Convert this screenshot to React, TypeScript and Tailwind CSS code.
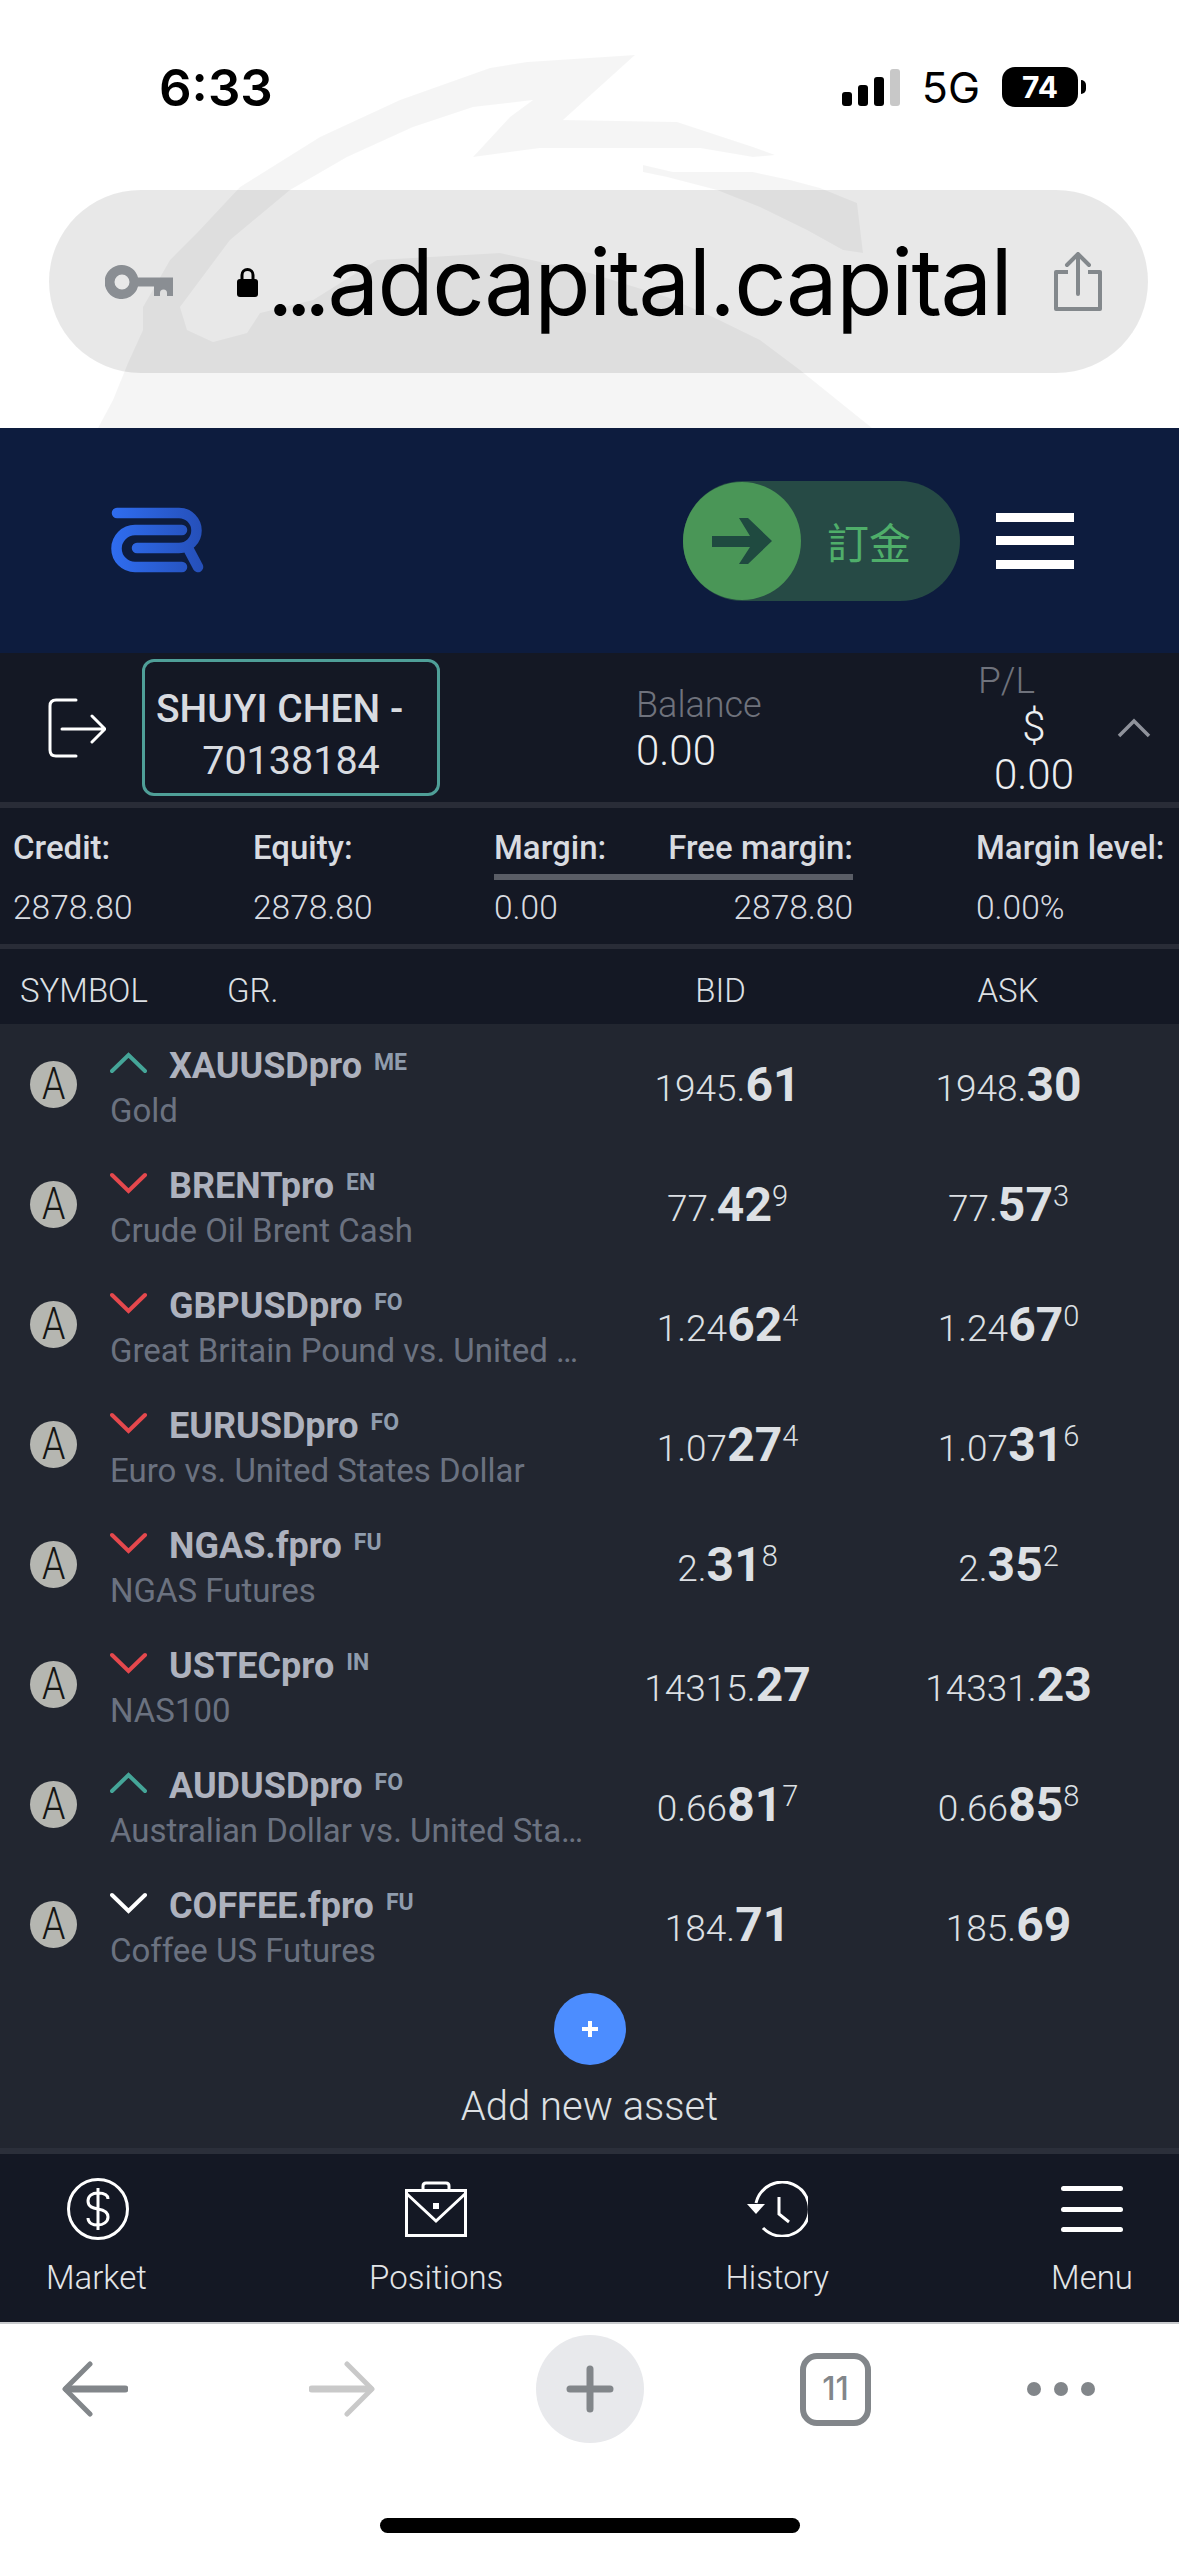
import type { ReactNode } from "react";

const assets = [
  { symbol: "XAUUSDpro", group: "ME", name: "Gold", dir: "up", bid: ["1945.", "61", ""], ask: ["1948.", "30", ""] },
  { symbol: "BRENTpro", group: "EN", name: "Crude Oil Brent Cash", dir: "down", bid: ["77.", "42", "9"], ask: ["77.", "57", "3"] },
  { symbol: "GBPUSDpro", group: "FO", name: "Great Britain Pound vs. United States Dollar", dir: "down", bid: ["1.24", "62", "4"], ask: ["1.24", "67", "0"] },
  { symbol: "EURUSDpro", group: "FO", name: "Euro vs. United States Dollar", dir: "down", bid: ["1.07", "27", "4"], ask: ["1.07", "31", "6"] },
  { symbol: "NGAS.fpro", group: "FU", name: "NGAS Futures", dir: "down", bid: ["2.", "31", "8"], ask: ["2.", "35", "2"] },
  { symbol: "USTECpro", group: "IN", name: "NAS100", dir: "down", bid: ["14315.", "27", ""], ask: ["14331.", "23", ""] },
  { symbol: "AUDUSDpro", group: "FO", name: "Australian Dollar vs. United States Dollar", dir: "up", bid: ["0.66", "81", "7"], ask: ["0.66", "85", "8"] },
  { symbol: "COFFEE.fpro", group: "FU", name: "Coffee US Futures", dir: "flat", bid: ["184.", "71", ""], ask: ["185.", "69", ""] },
];

function Chevron({ dir }: { dir: string }) {
  const color = dir === "up" ? "#45a598" : dir === "down" ? "#e5484d" : "#ffffff";
  return (
    <svg width="37" height="22" viewBox="0 0 37 22" className="shrink-0 mr-[22px] -mt-[5px]" fill="none" stroke={color} strokeWidth="4" strokeLinecap="round" strokeLinejoin="miter">
      {dir === "up" ? <path d="M2 19 L18.5 3 L35 19" /> : <path d="M2 3 L18.5 19 L35 3" />}
    </svg>
  );
}

function Price({ parts }: { parts: string[] }) {
  return (
    <div className="w-[281px] text-center text-[#dde0e4] whitespace-nowrap pt-[2px]">
      <span className="text-[37px] font-light">{parts[0]}</span>
      <span className="text-[48px] font-bold">{parts[1]}</span>
      {parts[2] && <span className="text-[29px] font-light align-[15px]">{parts[2]}</span>}
    </div>
  );
}

function AssetRow({ asset }: { asset: (typeof assets)[number] }) {
  return (
    <div className="h-[120px] flex items-center pl-[30px]">
      <div className="w-[47px] h-[47px] rounded-full bg-[#b5b6b1] flex items-center justify-center shrink-0">
        <span className="text-[44px] font-light leading-none text-[#161616] scale-x-[0.85]">A</span>
      </div>
      <div className="ml-[33px] w-[477px] mt-[10px] min-w-0">
        <div className="flex items-center h-[40px]">
          <Chevron dir={asset.dir} />
          <span className="text-[36px] font-bold text-[#aeb2be]">{asset.symbol}</span>
          <span className="ml-[12px] text-[23px] font-bold text-[#8f9cad] -mt-[4px]">{asset.group}</span>
        </div>
        <div className="text-[33px] text-[#6b7280] truncate leading-[44px] mt-[3px]">{asset.name}</div>
      </div>
      <Price parts={asset.bid} />
      <Price parts={asset.ask} />
    </div>
  );
}

function NavItem({ label, children }: { label: string; children: ReactNode }) {
  return (
    <div className="flex flex-col items-center">
      <div className="h-[62px] flex items-center justify-center">{children}</div>
      <span className="text-[33px] font-light text-[#e3e5e8] leading-[40px] mt-[18px]">{label}</span>
    </div>
  );
}

export default function App() {
  return (
    <div className="w-[1179px] h-[2556px] bg-white overflow-hidden font-['Roboto',sans-serif]">
      {/* browser chrome */}
      <div className="relative h-[428px] pt-[67px]">
        <svg className="absolute inset-0 pointer-events-none" width="1179" height="428" viewBox="0 0 1179 428" fill="#000" fillOpacity="0.04">
          <path d="M635 55 L527 62 L490 68 L400 100 L320 137 L240 187 L197 233 L170 260 L143 307 L143 330 L128 363 L113 400 L98 428 L872 428 L800 370 L760 340 L713 317 L667 297 L590 273 L500 253 L377 260 L313 300 L260 313 L247 333 L213 342 L187 330 L180 307 L230 240 L290 190 L347 157 L413 127 L473 107 L533 100 L510 117 L473 157 L540 148 L700 148 L753 157 L775 155 L753 147 L677 122 L563 120 Z" />
          <path d="M643 165 L673 172 L753 172 L790 180 L820 188 L857 203 L863 253 L843 250 L807 230 L760 207 L717 190 L667 177 L643 172 Z" />
        </svg>
        <div className="relative flex items-center h-[40px] font-['Inter',sans-serif]">
          <span className="ml-[159px] text-[51px] font-semibold text-black leading-none">6:33</span>
          <div className="ml-auto flex items-center mr-[93px]">
            <svg width="58" height="37" viewBox="0 0 58 37">
              <rect x="0" y="23" width="10" height="14" rx="3" fill="#000" />
              <rect x="16" y="16" width="10" height="21" rx="3" fill="#000" />
              <rect x="32" y="8" width="10" height="29" rx="3" fill="#000" />
              <rect x="48" y="0" width="10" height="37" rx="3" fill="#c8c8c8" />
            </svg>
            <span className="ml-[22px] text-[43px] text-black leading-none">5G</span>
            <div className="ml-[22px] w-[76px] h-[40px] rounded-[13px] bg-black flex items-center justify-center text-[30px] font-bold text-white">74</div>
            <div className="ml-[3px] w-[5px] h-[14px] rounded-r-full bg-black" />
          </div>
        </div>
        <div className="relative mt-[83px] ml-[49px] mr-[31px] h-[183px] rounded-full bg-black/[0.09] flex items-center">
          <svg className="ml-[56px]" width="68" height="34" viewBox="0 0 68 34" fill="#8a8e93">
            <path fillRule="evenodd" d="M17 0 A17 17 0 0 1 33 12.5 H68 V31 H62 V28 A3.5 3.5 0 0 0 55 28 V31 H49 V21.5 H33 A17 17 0 1 1 17 0 Z M17 9.5 A7.5 7.5 0 1 0 17 24.5 A7.5 7.5 0 1 0 17 9.5 Z" />
          </svg>
          <svg className="ml-[64px]" width="21" height="30" viewBox="0 0 21 30">
            <path d="M5 13 V8 A5.5 5.5 0 0 1 16 8 V13" fill="none" stroke="#000" strokeWidth="3" />
            <rect x="0" y="12" width="21" height="18" rx="3" fill="#000" />
          </svg>
          <span className="ml-[9px] text-[92px] leading-none text-black font-['Inter',sans-serif] whitespace-nowrap tracking-[-1.6px]">
            <span className="tracking-[-8px] mr-[5px]">...</span>adcapital.capital
          </span>
          <svg className="absolute left-[1004px] top-[62px]" width="50" height="60" viewBox="0 0 50 60" fill="none" stroke="#83888c" strokeWidth="4">
            <path d="M15 20 H3 V57 H47 V20 H35" strokeLinejoin="round" />
            <path d="M25 42 V3 M14 13 L25 2 L36 13" strokeLinecap="round" />
          </svg>
        </div>
      </div>

      {/* site header */}
      <div className="h-[225px] bg-[#0d1c3e] flex items-center">
        <svg className="ml-[111px] -mt-[1px]" width="93" height="66" viewBox="0 0 93 66" fill="none" strokeWidth="10.5" strokeLinecap="round" stroke="url(#logoGrad)">
          <defs>
            <linearGradient id="logoGrad" x1="0" y1="0" x2="93" y2="0" gradientUnits="userSpaceOnUse">
              <stop offset="0" stopColor="#2f6df0" />
              <stop offset="1" stopColor="#254fb8" />
            </linearGradient>
          </defs>
          <path d="M6 6 H68 A17.5 17.5 0 0 1 68 41 H26" />
          <path d="M71 23 H24 A18.5 18.5 0 0 0 24 60 H71" />
          <path d="M78 43 L87 60" />
        </svg>
        <div className="ml-[479px] w-[277px] h-[120px] rounded-full bg-[#264a45] flex items-center font-['Noto_Sans_CJK_TC',sans-serif]">
          <div className="w-[118px] h-[118px] rounded-full bg-[#4a9657] flex items-center justify-center shrink-0">
            <svg width="60" height="46" viewBox="0 0 60 46" fill="#1f4a40">
              <path d="M0 18 H38 L27 0 H36 L60 23 L36 46 H27 L38 29 H0 Z" />
            </svg>
          </div>
          <span className="ml-[26px] text-[42px] text-[#4fae6a] leading-none whitespace-nowrap">訂金</span>
        </div>
        <div className="ml-[36px] w-[78px] h-[56px] flex flex-col justify-between">
          <div className="h-[9px] bg-white" />
          <div className="h-[9px] bg-white" />
          <div className="h-[9px] bg-white" />
        </div>
      </div>

      {/* account summary */}
      <div className="h-[149px] bg-[#141824] flex items-center">
        <svg className="ml-[48px]" width="58" height="60" viewBox="0 0 58 60" fill="none" stroke="#fff" strokeWidth="3" strokeLinecap="round" strokeLinejoin="round">
          <path d="M28 2 H8 Q2 2 2 8 V52 Q2 58 8 58 H28" />
          <path d="M14 31 H56 M44 18 L57 31 L44 44" />
        </svg>
        <div className="ml-[36px] w-[298px] h-[137px] border-[3px] border-[#4f9f98] rounded-[12px] flex flex-col justify-center text-center leading-[51px] pt-[15px]">
          <span className="text-[39px] font-medium text-[#d8dbe0] whitespace-nowrap text-left pl-[11px]">SHUYI CHEN -</span>
          <span className="text-[39.5px] text-[#d8dbe0]">70138184</span>
        </div>
        <div className="ml-[196px] w-[342px] leading-[45px]">
          <div className="text-[36px] font-light text-[#6f727c]">Balance</div>
          <div className="text-[42px] font-light text-[#eceef0]">0.00</div>
        </div>
        <div className="w-[112px] leading-[48px] text-center">
          <div className="text-[37px] font-light text-[#6f727c] text-left">P/L</div>
          <div className="text-[42px] font-light text-[#eceef0] -mt-[2px]">$</div>
          <div className="text-[42px] font-light text-[#eceef0]">0.00</div>
        </div>
        <svg className="ml-[27px]" width="34" height="20" viewBox="0 0 34 20" fill="none" stroke="#8f929b" strokeWidth="3.5">
          <path d="M2 18 L17 3 L32 18" />
        </svg>
      </div>
      <div className="h-[6px] bg-[#292c37]" />

      {/* margins */}
      <div className="h-[136px] bg-[#141824] flex pl-[13px] pt-[21px] text-[#d8dbe0]">
        <div className="w-[240px]">
          <div className="text-[33px] font-medium leading-[38px]">Credit:</div>
          <div className="text-[33.5px] font-light leading-[40px] mt-[21px]">2878.80</div>
        </div>
        <div className="w-[241px]">
          <div className="text-[33px] font-medium leading-[38px]">Equity:</div>
          <div className="text-[33.5px] font-light leading-[40px] mt-[21px]">2878.80</div>
        </div>
        <div className="w-[359px]">
          <div className="flex justify-between text-[33px] font-medium leading-[38px]">
            <span>Margin:</span>
            <span>Free margin:</span>
          </div>
          <div className="h-[6px] bg-[#5a5d66] mt-[7px]" />
          <div className="flex justify-between text-[33.5px] font-light leading-[40px] mt-[8px]">
            <span>0.00</span>
            <span>2878.80</span>
          </div>
        </div>
        <div className="ml-[123px] whitespace-nowrap">
          <div className="text-[33px] font-medium leading-[38px]">Margin level:</div>
          <div className="text-[33.5px] font-light leading-[40px] mt-[21px]">0.00%</div>
        </div>
      </div>
      <div className="h-[5px] bg-[#292c37]" />

      {/* table head */}
      <div className="h-[75px] bg-[#141824] flex items-center text-[33px] font-light text-[#dde0e4] pt-[9px]">
        <div className="w-[227px] pl-[20px]">SYMBOL</div>
        <div className="w-[354px]">GR.</div>
        <div className="w-[279px] text-center">BID</div>
        <div className="w-[296px] text-center">ASK</div>
      </div>

      {/* assets */}
      <div className="h-[1124px] bg-[#222630]">
        {assets.map((asset) => (
          <AssetRow key={asset.symbol} asset={asset} />
        ))}
        <div className="flex flex-col items-center pt-[9px]">
          <div className="w-[72px] h-[72px] rounded-full bg-[#4c8dff] flex items-center justify-center">
            <svg width="20" height="20" viewBox="0 0 20 20" stroke="#fff" strokeWidth="4">
              <path d="M10 2 V18 M2 10 H18" />
            </svg>
          </div>
          <div className="mt-[20px] text-[40px] font-light text-[#dde0e4] leading-[44px]">Add new asset</div>
        </div>
      </div>
      <div className="h-[6px] bg-[#2b2f3a]" />

      {/* bottom nav */}
      <div className="h-[168px] bg-[#141824] flex justify-between px-[46px] pt-[24px]">
        <NavItem label="Market">
          <svg width="62" height="62" viewBox="0 0 62 62" fill="none" stroke="#fff" strokeWidth="3" className="ml-[3px]">
            <circle cx="31" cy="31" r="29.5" />
            <path d="M31 10 V52 M41 21 C41 16 36 15 31 15 C25 15 21 18 21 23 C21 29 26 30 31 31 C37 32 41 34 41 39 C41 44 36 47 31 47 C26 47 21 45 21 40" />
          </svg>
        </NavItem>
        <NavItem label="Positions">
          <svg width="62" height="56" viewBox="0 0 62 56" fill="none" stroke="#fff" strokeWidth="3">
            <rect x="1.5" y="9.5" width="59" height="45" />
            <path d="M18 9 V5 Q18 2 21 2 H41 Q44 2 44 5 V9" />
            <path d="M2 13 L31 40 L60 13" />
            <rect x="28" y="22" width="6" height="6" fill="#fff" stroke="none" />
          </svg>
        </NavItem>
        <NavItem label="History">
          <svg width="62" height="56" viewBox="0 0 62 56" fill="none" stroke="#fff" strokeWidth="3">
            <path d="M10 22 A27 27 0 1 1 17 47" />
            <path d="M1 25 H19 L10 35 Z" fill="#fff" stroke="none" transform="translate(0 -2)" />
            <path d="M33 16 V33 L43 41" />
          </svg>
        </NavItem>
        <NavItem label="Menu">
          <div className="w-[62px] h-[46px] flex flex-col justify-between">
            <div className="h-[5px] rounded-full bg-white" />
            <div className="h-[5px] rounded-full bg-white" />
            <div className="h-[5px] rounded-full bg-white" />
          </div>
        </NavItem>
      </div>
      <div className="h-[2px] bg-[#c8cacd]" />

      {/* browser toolbar */}
      <div className="h-[130px] flex items-center pl-[62px]">
        <svg width="66" height="56" viewBox="0 0 66 56" fill="none" stroke="#82868a" strokeLinecap="round" strokeLinejoin="round">
          <path d="M28 3 L3 28 L28 53" strokeWidth="5" />
          <path d="M5 28 H63" strokeWidth="7" />
        </svg>
        <svg className="ml-[181px]" width="66" height="56" viewBox="0 0 66 56" fill="none" stroke="#c9c9c9" strokeLinecap="round" strokeLinejoin="round">
          <path d="M38 3 L63 28 L38 53" strokeWidth="5" />
          <path d="M3 28 H61" strokeWidth="7" />
        </svg>
        <div className="ml-[161px] w-[108px] h-[108px] rounded-full bg-[#e8e9ec] flex items-center justify-center">
          <svg width="48" height="48" viewBox="0 0 48 48" stroke="#82868a" strokeWidth="7" strokeLinecap="round">
            <path d="M24 4 V44 M4 24 H44" />
          </svg>
        </div>
        <div className="ml-[156px] w-[71px] h-[73px] rounded-[17px] border-[6px] border-[#82868a] flex items-center justify-center text-[32px] font-medium text-[#82868a] font-['Inter',sans-serif]">11</div>
        <div className="ml-[156px] w-[68px] flex justify-between">
          <div className="w-[14px] h-[14px] rounded-full bg-[#82868a]" />
          <div className="w-[14px] h-[14px] rounded-full bg-[#82868a]" />
          <div className="w-[14px] h-[14px] rounded-full bg-[#82868a]" />
        </div>
      </div>
      <div className="mt-[64px] mx-auto w-[420px] h-[15px] rounded-full bg-black" />
    </div>
  );
}
